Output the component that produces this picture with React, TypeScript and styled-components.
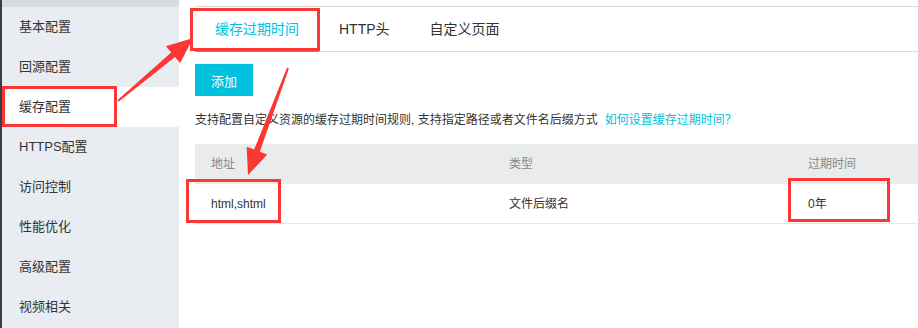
import React, { FC } from 'react';
import styled, { createGlobalStyle } from 'styled-components';

const CYAN = '#00c1de';
const RED = '#fc3535';

const GlobalStyle = createGlobalStyle`
  html, body {
    margin: 0;
    padding: 0;
    background: #fff;
    overflow: hidden;
  }
  body {
    font-family: 'Liberation Sans', 'Noto Sans CJK SC', sans-serif;
    color: #333;
  }
`;

const Page = styled.div`
  position: relative;
  display: flex;
  width: 918px;
  height: 328px;
  overflow: hidden;
`;

const Sidebar = styled.nav`
  width: 177px;
  flex-shrink: 0;
  border-left: 2px solid #3a3d42;
  background: #e9ecf0;
  display: flex;
  flex-direction: column;
  &::before {
    content: '';
    display: block;
    height: 7px;
    background: #d8dce2;
  }
`;

const NavItem = styled.div<{ active?: boolean }>`
  height: 40px;
  display: flex;
  align-items: center;
  padding-left: 17px;
  font-size: 13px;
  line-height: 16px;
  color: #333;
  background: ${(props) => (props.active ? '#fff' : 'transparent')};
`;

const Main = styled.main`
  flex: 1;
  min-width: 0;
  padding: 6px 0 0 16px;
  background: #fff;
  overflow: hidden;
`;

const TabBar = styled.div`
  display: flex;
  height: 44px;
  border-top: 1px solid #dcdcdc;
  border-bottom: 1px solid #dcdcdc;
`;

const Tab = styled.div<{ active?: boolean }>`
  display: flex;
  align-items: center;
  padding: 0 20px;
  margin-bottom: -1px;
  font-size: 14px;
  line-height: 18px;
  color: ${(props) => (props.active ? CYAN : '#333')};
  border-bottom: 2px solid ${(props) => (props.active ? CYAN : 'transparent')};
`;

const AddButton = styled.button`
  display: block;
  margin-top: 12px;
  width: 58px;
  height: 32px;
  border: none;
  background: ${CYAN};
  color: #fff;
  font-family: inherit;
  font-size: 13px;
  padding: 0;
`;

const Desc = styled.p`
  margin: 16px 0;
  font-size: 12px;
  line-height: 16px;
  color: #333;
  white-space: nowrap;
  a {
    color: ${CYAN};
    text-decoration: none;
    margin-left: 7px;
  }
`;

const Table = styled.div`
  width: 895px;
`;

const Row = styled.div<{ head?: boolean }>`
  display: grid;
  grid-template-columns: 298px 299px 1fr;
  height: ${(props) => (props.head ? 40 : 39)}px;
  align-items: center;
  background: ${(props) => (props.head ? '#eaebeb' : '#fff')};
  border-bottom: ${(props) => (props.head ? 'none' : '1px solid #e6e6e6')};
  font-size: 12px;
  line-height: 16px;
  color: ${(props) => (props.head ? '#888' : '#333')};
`;

const Cell = styled.div`
  padding-left: 16px;
`;

const Overlay = styled.svg`
  position: absolute;
  left: 0;
  top: 0;
  pointer-events: none;
`;

const navItems = [
  '基本配置',
  '回源配置',
  '缓存配置',
  'HTTPS配置',
  '访问控制',
  '性能优化',
  '高级配置',
  '视频相关',
];

const Annotations: FC = () => (
  <Overlay width={918} height={328} viewBox='0 0 918 328'>
    <g fill='none' stroke={RED} strokeWidth={3}>
      <rect x={3.5} y={87.5} width={112} height={38} />
      <rect x={191.5} y={9.5} width={127} height={40} />
      <rect x={187.5} y={180.5} width={92} height={41} />
      <rect x={789.5} y={179.5} width={99} height={41} />
    </g>
    <g fill={RED}>
      <polygon points='118.6,101.8 175,57 180.2,63.1 193,38 166,46.3 171.2,52.4 117.4,100.2' />
      <polygon points='288.9,68.4 259.8,151.7 267.3,154.5 248,175 246.7,146.7 254.2,149.5 287.1,67.6' />
    </g>
  </Overlay>
);

const App: FC = () => {
  return (
    <Page>
      <GlobalStyle />
      <Sidebar>
        {navItems.map((item) => (
          <NavItem key={item} active={item === '缓存配置'}>
            {item}
          </NavItem>
        ))}
      </Sidebar>
      <Main>
        <TabBar>
          <Tab active>缓存过期时间</Tab>
          <Tab>HTTP头</Tab>
          <Tab>自定义页面</Tab>
        </TabBar>
        <AddButton>添加</AddButton>
        <Desc>
          支持配置自定义资源的缓存过期时间规则, 支持指定路径或者文件名后缀方式
          <a href='#'>如何设置缓存过期时间？</a>
        </Desc>
        <Table>
          <Row head>
            <Cell>地址</Cell>
            <Cell>类型</Cell>
            <Cell>过期时间</Cell>
          </Row>
          <Row>
            <Cell>html,shtml</Cell>
            <Cell>文件后缀名</Cell>
            <Cell>0年</Cell>
          </Row>
        </Table>
      </Main>
      <Annotations />
    </Page>
  );
};

export default App;
